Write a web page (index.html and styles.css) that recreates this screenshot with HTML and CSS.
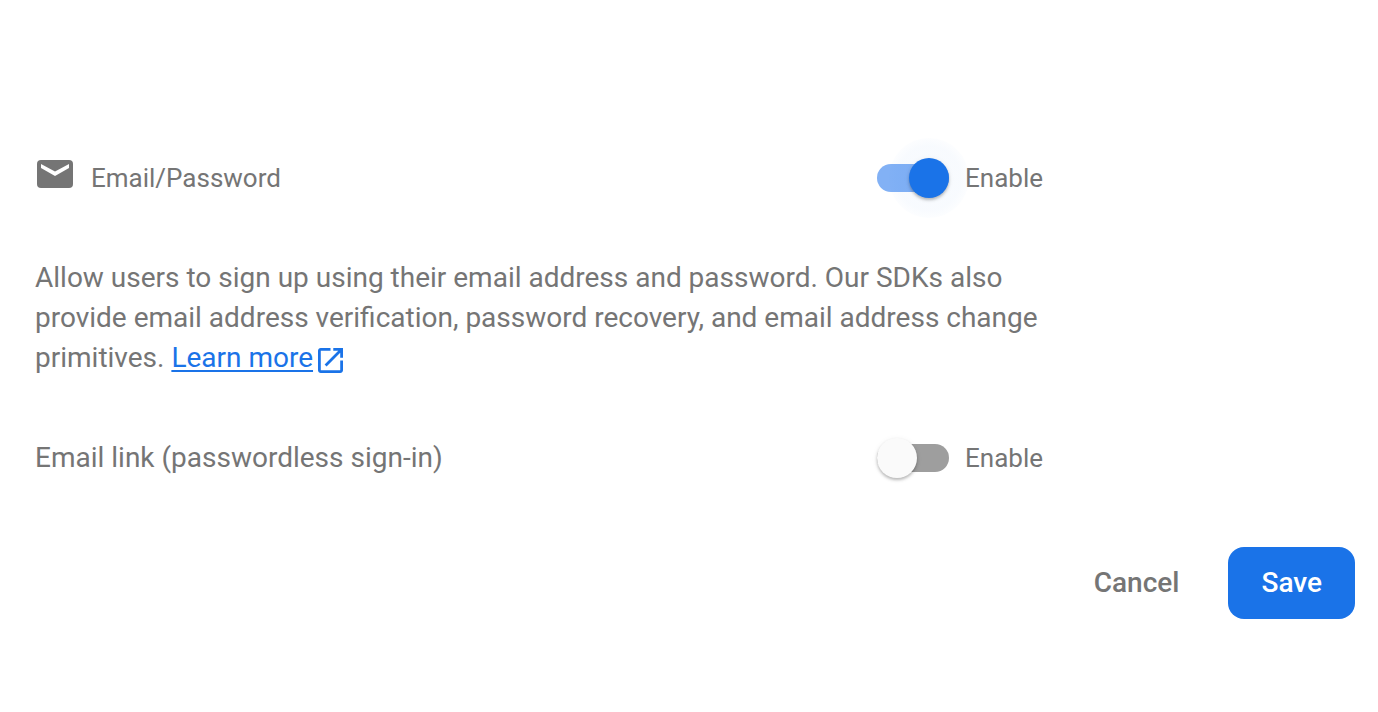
FILE: index.html
```html
<!DOCTYPE html>
<html lang="en">
<head>
<meta charset="utf-8">
<meta name="viewport" content="width=device-width, initial-scale=1">
<title>Email/Password</title>
<link rel="stylesheet" href="styles.css">
</head>
<body>
<form class="panel">
  <div class="settings">
    <div class="row">
      <div class="provider">
        <svg class="mail-icon" viewBox="0 0 36 28" aria-hidden="true"><rect width="36" height="28" rx="4" fill="#757575"/><path d="M4 4v4l14 8 14-8V4l-14 7.600z" fill="#fff"/></svg>
        <span>Email/Password</span>
      </div>
      <label class="toggle"><input class="switch switch-focus" type="checkbox" checked><span>Enable</span></label>
    </div>
    <p class="description">Allow users to sign up using their email address and password. Our SDKs also provide email address verification, password recovery, and email address change primitives. <a class="link" href="#learn-more">Learn more<svg class="open-icon" viewBox="3 3 18 18" aria-hidden="true"><path fill="currentColor" d="M19 19H5V5h7V3H5c-1.1 0-2 .9-2 2v14c0 1.100.9 2 2 2h14c1.100 0 2-.9 2-2v-7h-2v7zM14 3v2h3.590l-9.830 9.830 1.410 1.410L19 6.410V10h2V3h-7z"/></svg></a></p>
    <div class="row">
      <span class="option">Email link (passwordless sign-in)</span>
      <label class="toggle"><input class="switch" type="checkbox"><span>Enable</span></label>
    </div>
  </div>
  <div class="actions">
    <button class="button" type="button">Cancel</button>
    <button class="button button-primary" type="button">Save</button>
  </div>
</form>
</body>
</html>
```
FILE: styles.css
```css
* {
  box-sizing: border-box;
}

body {
  margin: 0;
  background: #fff;
  color: #757575;
  font-family: Roboto, "Liberation Sans", sans-serif;
  font-size: 28px;
  line-height: 40px;
}

.panel {
  padding: 158px 23px 64px 35px;
}

.settings {
  display: flex;
  flex-direction: column;
  gap: 60px;
  max-width: 1008px;
}

.row {
  display: flex;
  align-items: center;
  justify-content: space-between;
}

.provider {
  display: flex;
  align-items: center;
  gap: 18px;
  padding-left: 2px;
  font-size: 26px;
}

.mail-icon {
  width: 36px;
  height: 28px;
  margin-bottom: 8px;
}

.toggle {
  display: flex;
  align-items: center;
  gap: 16px;
  font-size: 26px;
}

.switch {
  appearance: none;
  position: relative;
  width: 72px;
  height: 28px;
  margin: 0;
  border-radius: 14px;
  background: #9e9e9e;
}

.switch::before {
  content: "";
  position: absolute;
  top: -6px;
  left: 0;
  width: 40px;
  height: 40px;
  border-radius: 50%;
  background: #fafafa;
  box-shadow: 0 2px 3px rgba(0, 0, 0, 0.25), 0 1px 6px rgba(0, 0, 0, 0.06);
}

.switch:checked {
  background: #82b1f5;
}

.switch:checked::before {
  left: 32px;
  background: #1a73e8;
}

.switch-focus::after {
  content: "";
  position: absolute;
  top: -26px;
  left: 12px;
  width: 80px;
  height: 80px;
  border-radius: 50%;
  background: radial-gradient(closest-side, rgba(26, 115, 232, 0.03) 80%, rgba(26, 115, 232, 0.01));
}

.description {
  margin: 0;
}

.link {
  color: #1a73e8;
  text-decoration: underline;
  text-decoration-thickness: 2px;
  text-underline-offset: 3px;
}

.open-icon {
  width: 25px;
  height: 25px;
  margin-left: 5px;
  vertical-align: -6px;
}

.actions {
  display: flex;
  justify-content: flex-end;
  gap: 16px;
  margin-top: 69px;
}

.button {
  height: 72px;
  padding: 0 33px;
  border: 0;
  border-radius: 16px;
  background: transparent;
  color: #757575;
  font: 500 28px/40px Roboto, "Liberation Sans", sans-serif;
}

.button-primary {
  background: #1a73e8;
  color: #fff;
}
```
